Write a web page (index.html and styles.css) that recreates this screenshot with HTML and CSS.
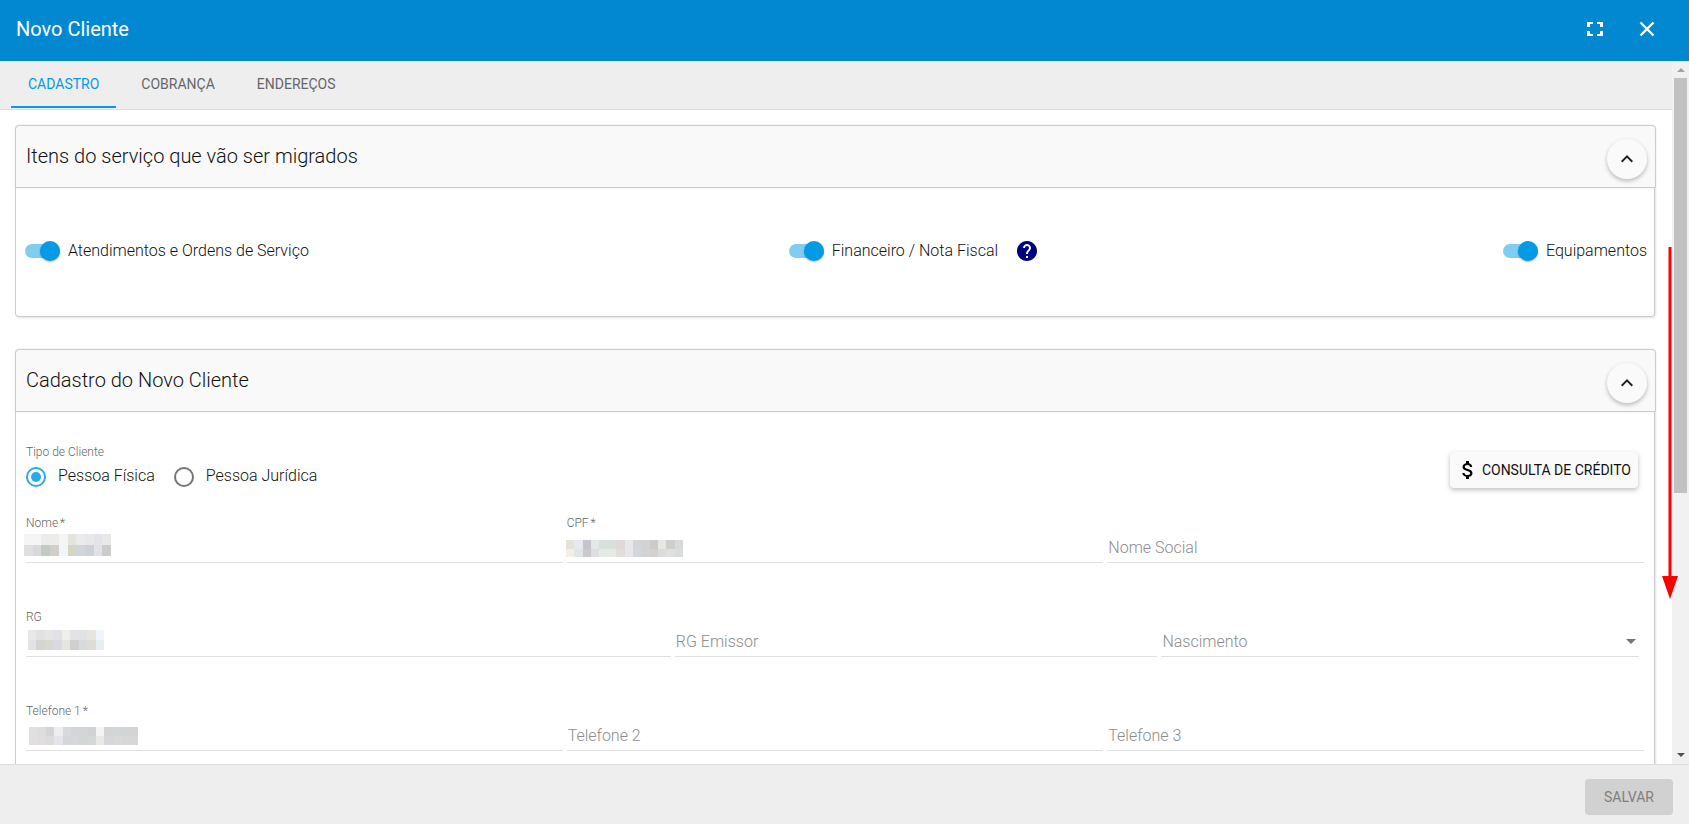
FILE: index.html
```html
<!DOCTYPE html>
<html lang="pt-BR">
<head>
<meta charset="utf-8">
<title>Novo Cliente</title>
<link rel="stylesheet" href="styles.css">
</head>
<body>
<div class="dialog">
  <header class="toolbar">
    <h1 class="toolbar-title">Novo Cliente</h1>
    <button class="icon-button" type="button" aria-label="Tela cheia">
      <svg width="24" height="24" viewBox="0 0 24 24"><path fill="#fff" d="M4 5h6v2H7v3H4zM14 5h6v5h-3V7h-3zM4 14h3v3h3v2H4zM17 14h3v5h-6v-2h3z"/></svg>
    </button>
    <button class="icon-button" type="button" aria-label="Fechar">
      <svg width="24" height="24" viewBox="0 0 24 24"><path fill="none" stroke="#fff" stroke-width="2.4" d="M5.5 5.5l13 13M18.500 5.500l-13 13"/></svg>
    </button>
  </header>

  <div class="viewport">
    <div class="content">
      <nav class="tabs" role="tablist">
        <button class="tab tab-active" type="button" role="tab" aria-selected="true">CADASTRO</button>
        <button class="tab" type="button" role="tab">COBRANÇA</button>
        <button class="tab" type="button" role="tab">ENDEREÇOS</button>
      </nav>

      <main class="cards">
        <section class="card">
          <div class="card-header">
            <h2 class="card-title">Itens do serviço que vão ser migrados</h2>
            <button class="fab" type="button" aria-label="Recolher">
              <svg width="24" height="24" viewBox="0 0 24 24"><path fill="#212121" d="M7.410 15.410L12 10.830l4.590 4.580L18 14l-6-6-6 6z"/></svg>
            </button>
          </div>
          <div class="card-body switches">
            <div class="switch-item switch-first">
              <input class="switch" type="checkbox" role="switch" id="sw-os" checked>
              <label class="switch-label" for="sw-os">Atendimentos e Ordens de Serviço</label>
            </div>
            <div class="switch-item">
              <input class="switch" type="checkbox" role="switch" id="sw-fin" checked>
              <label class="switch-label" for="sw-fin">Financeiro / Nota Fiscal</label>
              <svg class="help" width="24" height="24" viewBox="0 0 24 24"><path fill="#000080" d="M12 2C6.480 2 2 6.480 2 12s4.480 10 10 10 10-4.480 10-10S17.520 2 12 2zm1 17h-2v-2h2v2zm2.070-7.750l-.9.920C13.450 12.900 13 13.500 13 15h-2v-.5c0-1.100.450-2.100 1.170-2.830l1.240-1.260c.370-.360.590-.860.590-1.410 0-1.100-.9-2-2-2s-2 .9-2 2H8c0-2.210 1.790-4 4-4s4 1.790 4 4c0 .880-.360 1.680-.930 2.250z"/></svg>
            </div>
            <div class="switch-item">
              <input class="switch" type="checkbox" role="switch" id="sw-eq" checked>
              <label class="switch-label" for="sw-eq">Equipamentos</label>
            </div>
          </div>
        </section>

        <section class="card">
          <div class="card-header">
            <h2 class="card-title">Cadastro do Novo Cliente</h2>
            <button class="fab" type="button" aria-label="Recolher">
              <svg width="24" height="24" viewBox="0 0 24 24"><path fill="#212121" d="M7.410 15.410L12 10.830l4.590 4.580L18 14l-6-6-6 6z"/></svg>
            </button>
          </div>
          <form class="card-body form">
            <div class="form-top">
              <div class="client-type" role="radiogroup" aria-labelledby="tipo">
                <span class="field-label" id="tipo">Tipo de Cliente</span>
                <div class="radios">
                  <input class="radio" type="radio" name="tipo" id="pf" checked>
                  <label class="radio-label" for="pf">Pessoa Física</label>
                  <input class="radio" type="radio" name="tipo" id="pj">
                  <label class="radio-label" for="pj">Pessoa Jurídica</label>
                </div>
              </div>
              <button class="raised" type="button">
                <svg width="24" height="24" viewBox="0 0 24 24"><path fill="#000" d="M11.800 10.900c-2.270-.590-3-1.200-3-2.150 0-1.090 1.010-1.850 2.700-1.850 1.780 0 2.440.850 2.500 2.100h2.210c-.070-1.720-1.120-3.300-3.210-3.810V3h-3v2.160c-1.940.420-3.500 1.680-3.500 3.610 0 2.310 1.910 3.460 4.700 4.130 2.500.6 3 1.480 3 2.410 0 .690-.490 1.790-2.700 1.790-2.060 0-2.870-.920-2.980-2.100h-2.200c.120 2.190 1.760 3.420 3.680 3.830V21h3v-2.150c1.950-.370 3.500-1.500 3.500-3.550 0-2.840-2.430-3.810-4.700-4.400z"/></svg>
                <span>CONSULTA DE CRÉDITO</span>
              </button>
            </div>

            <div class="row">
              <div class="field third">
                <label class="field-label" for="nome">Nome<span class="required">*</span></label>
                <input class="input" id="nome" type="text" required>
                <svg class="mosaic mosaic-nome" viewBox="0 0 10 2" preserveAspectRatio="none" shape-rendering="crispEdges">
                  <path fill="#f5f5f5" d="M0 0h2v1H0z"/><path fill="#ececea" d="M2 0h2v1H2z"/><path fill="#f4f6f6" d="M4 0h1v1H4z"/><path fill="#e4e4df" d="M5 0h1v1H5z"/><path fill="#ebebeb" d="M6 0h1v1H6z"/><path fill="#e8e8ea" d="M7 0h1v1H7z"/><path fill="#e4e4e8" d="M8 0h1v1H8z"/><path fill="#e8e8e8" d="M9 0h1v1H9z"/>
                  <path fill="#dfdfe1" d="M0 1h1v1H0z"/><path fill="#d9d9db" d="M1 1h1v1H1z"/><path fill="#c5c9c3" d="M2 1h1v1H2z"/><path fill="#d1cfcc" d="M3 1h1v1H3z"/><path fill="#f2f6fa" d="M4 1h1v1H4z"/><path fill="#d5d5c6" d="M5 1h1v1H5z"/><path fill="#cfd5d8" d="M6 1h1v1H6z"/><path fill="#cdd1d6" d="M7 1h1v1H7z"/><path fill="#e2e2e6" d="M8 1h1v1H8z"/><path fill="#cacbca" d="M9 1h1v1H9z"/>
                </svg>
              </div>
              <div class="field third">
                <label class="field-label" for="cpf">CPF<span class="required">*</span></label>
                <input class="input" id="cpf" type="text" required>
                <svg class="mosaic mosaic-cpf" viewBox="0 0 14 2" preserveAspectRatio="none" shape-rendering="crispEdges">
                  <path fill="#e6e2da" d="M0 0h1v1H0z"/><path fill="#e6eaee" d="M1 0h1v1H1z"/><path fill="#c6c4ca" d="M2 0h1v1H2z"/><path fill="#e4e8e8" d="M3 0h1v1H3z"/><path fill="#d9dfda" d="M4 0h2v1H4z"/><path fill="#dfd9d7" d="M6 0h1v1H6z"/><path fill="#e7e7ec" d="M7 0h1v1H7z"/><path fill="#d4d5d8" d="M8 0h1v1H8z"/><path fill="#d2d3d4" d="M9 0h1v1H9z"/><path fill="#cbcbcc" d="M10 0h1v1h-1z"/><path fill="#e6e6e4" d="M11 0h1v1h-1z"/><path fill="#cdcec9" d="M12 0h1v1h-1z"/><path fill="#d8d9db" d="M13 0h1v1h-1z"/>
                  <path fill="#f2efe8" d="M0 1h1v1H0z"/><path fill="#dfe6ea" d="M1 1h1v1H1z"/><path fill="#cacacc" d="M2 1h1v1H2z"/><path fill="#dedee2" d="M3 1h1v1H3z"/><path fill="#e6eae6" d="M4 1h2v1H4z"/><path fill="#e2dddb" d="M6 1h1v1H6z"/><path fill="#e6e7ea" d="M7 1h1v1H7z"/><path fill="#d4d6d9" d="M8 1h1v1H8z"/><path fill="#d1d4d3" d="M9 1h1v1H9z"/><path fill="#d3d0cf" d="M10 1h1v1h-1z"/><path fill="#dadcdb" d="M11 1h1v1h-1z"/><path fill="#e0dfe0" d="M12 1h1v1h-1z"/><path fill="#d9dbdd" d="M13 1h1v1h-1z"/>
                </svg>
              </div>
              <div class="field third">
                <input class="input" type="text" placeholder="Nome Social" aria-label="Nome Social">
              </div>
            </div>

            <div class="row">
              <div class="field wide">
                <label class="field-label" for="rg">RG</label>
                <input class="input" id="rg" type="text">
                <svg class="mosaic mosaic-rg" viewBox="0 0 9 2" preserveAspectRatio="none" shape-rendering="crispEdges">
                  <path fill="#e8e8ea" d="M0 0h1v1H0z"/><path fill="#e2e1df" d="M1 0h1v1H1z"/><path fill="#e5e5e3" d="M2 0h1v1H2z"/><path fill="#e1e2e8" d="M3 0h1v1H3z"/><path fill="#eeeeec" d="M4 0h1v1H4z"/><path fill="#e3e3e5" d="M5 0h1v1H5z"/><path fill="#e1e2e3" d="M6 0h1v1H6z"/><path fill="#e6e5e0" d="M7 0h1v1H7z"/><path fill="#f1f5f9" d="M8 0h1v1H8z"/>
                  <path fill="#e2e2e6" d="M0 1h1v1H0z"/><path fill="#d4d4d1" d="M1 1h1v1H1z"/><path fill="#d8d8d3" d="M2 1h1v1H2z"/><path fill="#d9d9e3" d="M3 1h1v1H3z"/><path fill="#e6e5e0" d="M4 1h1v1H4z"/><path fill="#cfcfd0" d="M5 1h1v1H5z"/><path fill="#d8dadb" d="M6 1h1v1H6z"/><path fill="#dddcd7" d="M7 1h1v1H7z"/><path fill="#e6eef0" d="M8 1h1v1H8z"/>
                </svg>
              </div>
              <div class="field narrow">
                <input class="input" type="text" placeholder="RG Emissor" aria-label="RG Emissor">
              </div>
              <div class="field narrow date-field">
                <div class="date">
                  <input class="date-input" type="text" placeholder="Nascimento" aria-label="Nascimento">
                  <button class="date-button" type="button" aria-label="Abrir calendário"><span class="triangle"></span></button>
                </div>
              </div>
            </div>

            <div class="row">
              <div class="field third">
                <label class="field-label" for="tel1">Telefone 1<span class="required">*</span></label>
                <input class="input" id="tel1" type="tel" required>
                <svg class="mosaic mosaic-tel" viewBox="0 0 13 2" preserveAspectRatio="none" shape-rendering="crispEdges">
                  <path fill="#e0e0e1" d="M0 0h1v1H0z"/><path fill="#dddcde" d="M1 0h1v1H1z"/><path fill="#d4d3d5" d="M2 0h1v1H2z"/><path fill="#ebedef" d="M3 0h1v1H3z"/><path fill="#d7d9de" d="M4 0h1v1H4z"/><path fill="#d3d5d6" d="M5 0h2v1H5z"/><path fill="#d1d2d3" d="M7 0h1v1H7z"/><path fill="#f4f4f2" d="M8 0h1v1H8z"/><path fill="#d3d4d4" d="M9 0h1v1H9z"/><path fill="#d3d6d6" d="M10 0h1v1h-1z"/><path fill="#d2d4d6" d="M11 0h2v1h-2z"/>
                  <path fill="#e0e0e1" d="M0 1h1v1H0z"/><path fill="#e1dddf" d="M1 1h1v1H1z"/><path fill="#dbdbdb" d="M2 1h1v1H2z"/><path fill="#e4e5e8" d="M3 1h1v1H3z"/><path fill="#d4d6d9" d="M4 1h1v1H4z"/><path fill="#d6d7d9" d="M5 1h1v1H5z"/><path fill="#d3d6d6" d="M6 1h1v1H6z"/><path fill="#d6d7d7" d="M7 1h1v1H7z"/><path fill="#e9e9e8" d="M8 1h1v1H8z"/><path fill="#d6d7d8" d="M9 1h1v1H9z"/><path fill="#dad8d8" d="M10 1h1v1h-1z"/><path fill="#d7d7d9" d="M11 1h2v1h-2z"/>
                </svg>
              </div>
              <div class="field third">
                <input class="input" type="tel" placeholder="Telefone 2" aria-label="Telefone 2">
              </div>
              <div class="field third">
                <input class="input" type="tel" placeholder="Telefone 3" aria-label="Telefone 3">
              </div>
            </div>
          </form>
        </section>
      </main>
    </div>

    <div class="scrollbar" aria-hidden="true">
      <span class="scroll-up"></span>
      <div class="scroll-track"><div class="scroll-thumb"></div></div>
      <span class="scroll-down"></span>
    </div>

    <svg class="scroll-hint" width="16" height="352" viewBox="0 0 16 352" aria-hidden="true">
      <path fill="red" d="M6.500 0h3v329H16L8 352 0 329h6.500z"/>
    </svg>
  </div>

  <footer class="footer">
    <button class="save" type="button" disabled>SALVAR</button>
  </footer>
</div>
</body>
</html>
```
FILE: styles.css
```css
* {
  box-sizing: border-box;
}

body {
  margin: 0;
  color: #111;
  background: #fff;
  font-family: Roboto, "Liberation Sans", sans-serif;
  font-size: 16px;
}

button,
input {
  margin: 0;
  padding: 0;
  border: 0;
  background: none;
  color: inherit;
  font-family: inherit;
}

svg {
  display: block;
}

.dialog {
  display: flex;
  flex-direction: column;
  height: 100vh;
}

/* Toolbar */
.toolbar {
  display: flex;
  flex: none;
  align-items: center;
  gap: 12px;
  height: 61px;
  padding: 0 22px 3px 16px;
  background: #0288d1;
  color: #fff;
}

.toolbar-title {
  flex: 1;
  margin: 0;
  font-size: 20px;
  font-weight: 400;
}

.icon-button {
  display: flex;
  align-items: center;
  justify-content: center;
  width: 40px;
  height: 40px;
}

/* Scrolling area */
.viewport {
  position: relative;
  display: flex;
  flex: 1;
  min-height: 0;
}

.content {
  flex: 1;
  min-width: 0;
  overflow: hidden;
}

.tabs {
  display: flex;
  gap: 8px;
  height: 49px;
  padding-left: 11px;
  border-bottom: 1px solid #dcdcdc;
  background: #eee;
}

.tab {
  height: 47px;
  padding: 0 17px;
  border-bottom: 2px solid transparent;
  color: #666;
  font-size: 14px;
  font-weight: 400;
}

.tab-active {
  border-color: #039be5;
  color: #039be5;
}

.cards {
  display: flex;
  flex-direction: column;
  gap: 32px;
  padding: 15px 16px 16px 15px;
}

.card-header {
  display: flex;
  align-items: center;
  justify-content: space-between;
  height: 63px;
  padding: 0 8px 0 10px;
  border: 1px solid #ccc;
  border-radius: 4px 4px 0 0;
  background: #f9f9f9;
  box-shadow: 0 0 2px rgba(0, 0, 0, 0.12);
}

.card-title {
  margin: 0;
  padding-bottom: 2px;
  font-size: 20px;
  font-weight: 300;
}

.fab {
  display: flex;
  align-items: center;
  justify-content: center;
  width: 40px;
  height: 40px;
  margin-top: 5px;
  border-radius: 50%;
  background: #fafafa;
  box-shadow: 0 2px 4px rgba(0, 0, 0, 0.26);
}

.card-body {
  margin-right: 1px;
  border: 1px solid #ccc;
  border-top: 0;
  border-radius: 0 0 4px 4px;
  box-shadow: 1px 1px 2px rgba(0, 0, 0, 0.12);
}

/* Switches */
.switches {
  display: flex;
  align-items: center;
  justify-content: space-between;
  height: 129px;
  padding: 0 7px 2px 9px;
  font-weight: 300;
}

.switch-item {
  display: flex;
  align-items: center;
}

.switch-first {
  padding-right: 16px;
}

.switch {
  display: flex;
  align-items: center;
  justify-content: flex-end;
  width: 35px;
  height: 14px;
  margin-right: 8px;
  border-radius: 7px;
  background: #81cdf2;
  appearance: none;
}

.switch::before {
  content: "";
  width: 20px;
  height: 20px;
  border-radius: 50%;
  background: #039be5;
  box-shadow: 0 1px 2px rgba(0, 0, 0, 0.3);
}

.switch-label {
  padding-bottom: 2px;
}

.help {
  margin-left: 17px;
}

/* Form */
.form {
  padding: 32px 6px 0 10px;
}

.form-top {
  display: flex;
  justify-content: space-between;
  margin-bottom: 27px;
  padding-right: 10px;
}

.field-label {
  display: block;
  height: 16px;
  color: #666;
  font-size: 12px;
  font-weight: 300;
  line-height: 16px;
}

.required {
  margin-left: 2px;
}

.radios {
  display: flex;
  align-items: center;
  margin-top: 7px;
}

.radio {
  width: 20px;
  height: 20px;
  border: 2px solid #757575;
  border-radius: 50%;
  appearance: none;
}

.radio:checked {
  padding: 3px;
  border-color: #29a9ea;
  background: #29a9ea content-box;
}

.radio-label {
  height: 20px;
  margin: 0 19px 0 12px;
  font-weight: 300;
  line-height: 18px;
}

.raised {
  display: flex;
  align-items: center;
  height: 36px;
  margin-top: 8px;
  padding: 0 6px;
  border-radius: 4px;
  background: #fafafa;
  box-shadow: 0 2px 5px rgba(0, 0, 0, 0.26);
  font-size: 14px;
  font-weight: 400;
}

.raised span {
  padding: 0 1px 1px 2px;
}

.row {
  display: flex;
  align-items: flex-end;
  margin-bottom: 46px;
}

.field {
  position: relative;
  flex: none;
  padding-right: 4px;
}

.third {
  width: calc(100% / 3);
}

.wide {
  width: 40%;
}

.narrow {
  width: 30%;
}

.date-field {
  padding-right: 9px;
}

.input,
.date {
  display: block;
  width: 100%;
  height: 31px;
  margin-top: 1px;
  border-bottom: 1px solid #e0e0e0;
}

.input,
.date-input {
  padding-left: 1px;
  font-size: 16px;
  font-weight: 300;
}

.date {
  display: flex;
  align-items: center;
  padding-right: 3px;
}

.date-input {
  flex: 1;
  min-width: 0;
}

.date-button {
  display: flex;
}

.triangle {
  border: 5px solid transparent;
  border-top-color: #757575;
  border-bottom: 0;
}

.input::placeholder,
.date-input::placeholder {
  color: #8c8c8c;
  opacity: 1;
}

/* Blurred values lying over their inputs */
.mosaic {
  position: absolute;
}

.mosaic-nome {
  bottom: 7px;
  left: -2px;
  width: 87px;
  height: 22px;
}

.mosaic-cpf {
  bottom: 6px;
  left: -1px;
  width: 117px;
  height: 17px;
}

.mosaic-rg {
  bottom: 7px;
  left: 2px;
  width: 76px;
  height: 20px;
}

.mosaic-tel {
  bottom: 6px;
  left: 3px;
  width: 109px;
  height: 18px;
}

/* Scrollbar */
.scrollbar {
  display: flex;
  flex: none;
  flex-direction: column;
  align-items: center;
  width: 17px;
  background: #f1f1f1;
}

.scroll-up,
.scroll-down {
  width: 8px;
  border: 4px solid transparent;
}

.scroll-up {
  margin: 7px 0 6px;
  border-top: 0;
  border-bottom-color: #a3a3a3;
}

.scroll-down {
  margin: 5px 0 7px;
  border-bottom: 0;
  border-top-color: #505050;
}

.scroll-track {
  flex: 1;
  width: 13px;
}

.scroll-thumb {
  height: 62%;
  background: #c1c1c1;
}

.scroll-hint {
  position: absolute;
  top: 186px;
  right: 11px;
}

/* Footer */
.footer {
  display: flex;
  flex: none;
  align-items: center;
  justify-content: flex-end;
  height: 60px;
  padding: 4px 16px 0;
  border-top: 1px solid #dcdcdc;
  background: #eee;
}

.save {
  height: 36px;
  padding: 0 19px;
  border-radius: 4px;
  background: #d1d1d1;
  color: #808080;
  font-size: 14px;
  font-weight: 400;
}
```
